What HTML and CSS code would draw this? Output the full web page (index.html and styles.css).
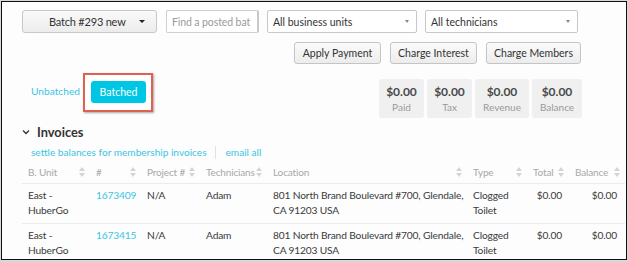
FILE: index.html
```html
<!DOCTYPE html>
<html>
<head>
<meta charset="utf-8">
<link rel="stylesheet" href="styles.css">
</head>
<body>
<div class="frame">
  <div class="toolbar">
    <button class="batch-btn"><span>Batch #293 new</span><span class="caret"></span></button>
    <input class="search" type="text" placeholder="Find a posted bat">
    <div class="select sel-bu"><span>All business units</span><span class="arrow"></span></div>
    <div class="select sel-tech"><span>All technicians</span><span class="arrow"></span></div>
  </div>
  <div class="actions">
    <button class="btn w-apply">Apply Payment</button>
    <button class="btn w-interest">Charge Interest</button>
    <button class="btn w-members">Charge Members</button>
  </div>
  <div class="summary">
    <div class="tabs">
      <span class="tab-link">Unbatched</span>
      <div class="highlight"><span class="tab-active">Batched</span></div>
    </div>
    <div class="stats">
      <div class="stat w-paid"><b>$0.00</b><span>Paid</span></div>
      <div class="stat w-tax"><b>$0.00</b><span>Tax</span></div>
      <div class="stat w-rev"><b>$0.00</b><span>Revenue</span></div>
      <div class="stat w-bal"><b>$0.00</b><span>Balance</span></div>
    </div>
  </div>
  <div class="section-title">
    <svg class="chev" width="8" height="6" viewBox="0 0 8 6"><path d="M1 1.5 L4 4.5 L7 1.5" fill="none" stroke="#333" stroke-width="1.3"/></svg>
    <span>Invoices</span>
  </div>
  <div class="links">
    <span class="link">settle balances for membership invoices</span>
    <span class="sep"></span>
    <span class="link">email all</span>
  </div>
  <table class="grid">
    <colgroup>
      <col class="c1"><col class="c2"><col class="c3"><col class="c4"><col class="c5"><col class="c6"><col class="c7"><col class="c8">
    </colgroup>
    <thead>
      <tr>
        <th><div class="th"><span>B. Unit</span><i class="sort"></i></div></th>
        <th><div class="th"><span>#</span><i class="sort"></i></div></th>
        <th><div class="th"><span>Project #</span><i class="sort"></i></div></th>
        <th><div class="th"><span>Technicians</span><i class="sort"></i></div></th>
        <th><div class="th"><span>Location</span><i class="sort"></i></div></th>
        <th><div class="th"><span>Type</span><i class="sort"></i></div></th>
        <th><div class="th"><span>Total</span><i class="sort"></i></div></th>
        <th><div class="th"><span>Balance</span><i class="sort"></i></div></th>
      </tr>
    </thead>
    <tbody>
      <tr>
        <td>East -<br>HuberGo</td>
        <td class="num">1673409</td>
        <td>N/A</td>
        <td>Adam</td>
        <td>801 North Brand Boulevard #700, Glendale,<br>CA 91203 USA</td>
        <td>Clogged<br>Toilet</td>
        <td class="money">$0.00</td>
        <td class="money">$0.00</td>
      </tr>
      <tr>
        <td>East -<br>HuberGo</td>
        <td class="num">1673415</td>
        <td>N/A</td>
        <td>Adam</td>
        <td>801 North Brand Boulevard #700, Glendale,<br>CA 91203 USA</td>
        <td>Clogged<br>Toilet</td>
        <td class="money">$0.00</td>
        <td class="money">$0.00</td>
      </tr>
    </tbody>
  </table>
</div>
</body>
</html>
```

FILE: styles.css
```css
* { box-sizing: border-box; }
html, body { margin: 0; padding: 0; background: #d8d8d8; }
body { font-family: Lato, "Open Sans", sans-serif; color: #3a3a3a; width: 628px; height: 262px; overflow: hidden; }

.frame {
  margin: 1px 0 0 1px;
  width: 626px;
  height: 259px;
  border: 1px solid #111;
  background: #fdfdfd;
  overflow: hidden;
  padding-left: 20px;
}

.toolbar { display: flex; margin-top: 8px; height: 23px; }
.batch-btn {
  width: 135px; height: 23px;
  border: 1px solid #c8c8c8; border-radius: 3px;
  background: linear-gradient(#fafafa, #ececec);
  font: 11px Lato, sans-serif; letter-spacing: -0.2px; color: #333; white-space: nowrap;
  display: flex; align-items: center; padding: 0 0 0 26px;
}
.batch-btn .caret {
  margin-left: auto; margin-right: 11px;
  width: 0; height: 0;
  border-left: 3px solid transparent; border-right: 3px solid transparent; border-top: 3px solid #222;
}
.search {
  margin-left: 9px; width: 93px; height: 23px;
  border: 1px solid #d0d0d0; border-right: 2px solid #c8c8c8; border-radius: 2px;
  font: 10.5px Lato, sans-serif; letter-spacing: -0.1px; padding: 0 5px; background: #fff;
}
.search::placeholder { color: #9a9a9a; }
.select {
  margin-left: 8px; height: 23px;
  border: 1px solid #c8c8c8; border-radius: 2px; background: #fff;
  display: flex; align-items: center; justify-content: space-between;
  padding: 0 7px 0 5px; font-size: 10.5px; color: #333;
}
.sel-bu { width: 150px; }
.sel-tech { width: 153px; }
.select .arrow {
  width: 0; height: 0;
  border-left: 2.5px solid transparent; border-right: 2.5px solid transparent; border-top: 3px solid #888;
}

.actions { display: flex; justify-content: flex-end; gap: 9px; margin-top: 9px; padding-right: 45px; }
.btn {
  height: 22px;
  border: 1px solid #c4c4c4; border-radius: 3px;
  background: linear-gradient(#fbfbfb, #ececec);
  font: 10.5px Lato, sans-serif; color: #333; padding: 0;
}
.w-apply { width: 87px; }
.w-interest { width: 87px; }
.w-members { width: 95px; }

.summary { display: flex; justify-content: space-between; margin-top: 9px; height: 45px; padding-right: 44px; }
.tabs { display: flex; align-items: flex-start; padding-left: 9px; }
.tab-link { color: #3cc4e4; font-size: 10.2px; margin-top: 12px; }
.highlight {
  margin-left: 3px; width: 70px; height: 39px;
  border: 2px solid #e0604f;
  box-shadow: 1px 1px 2px rgba(0,0,0,0.35);
  background: #fff;
  padding: 6px 0 0 6px;
}
.tab-active {
  display: flex; align-items: center; justify-content: center;
  width: 55px; height: 22px; border-radius: 3px;
  background: #00c6e6; color: #fff; font-size: 10.5px;
}
.stats { display: flex; gap: 3px; margin-top: 6px; }
.stat {
  height: 39px; background: #f0f0f0; border-radius: 3px;
  display: flex; flex-direction: column; align-items: center; padding-top: 5px;
}
.stat b { font-size: 12px; color: #4a4a4a; font-weight: 700; line-height: 15px; }
.stat span { font-size: 10px; color: #999; line-height: 14px; margin-top: 1px; }
.w-paid { width: 45px; }
.w-tax { width: 45px; }
.w-rev { width: 54px; }
.w-bal { width: 50px; }

.section-title { display: flex; align-items: center; margin-top: 5px; height: 18px; font-weight: 700; font-size: 12.8px; color: #333; padding-left: 0; }
.section-title .chev { margin-right: 7px; }

.links { display: flex; align-items: center; margin-top: 4px; padding-left: 9px; height: 14px; font-size: 10.1px; }
.link { color: #3cc4e4; }
.sep { width: 1px; height: 13px; background: #e2e2e2; margin: 0 10px 0 8px; }

.grid { border-collapse: collapse; table-layout: fixed; width: 603px; margin-top: 3px; font-size: 10.2px; letter-spacing: -0.15px; }
.c1 { width: 68px; } .c2 { width: 51px; } .c3 { width: 59px; } .c4 { width: 67px; }
.c5 { width: 200px; } .c6 { width: 60px; } .c7 { width: 42px; } .c8 { width: 56px; }
.grid th { font-weight: 400; color: #a8a8a8; text-align: left; padding: 0 5px 0 6px; height: 21px; border-bottom: 1px solid #ebebeb; overflow: hidden; font-size: 10px; }
.th { display: flex; justify-content: space-between; align-items: center; white-space: nowrap; }
.sort {
  position: relative; width: 6px; height: 10px; flex: none;
}
.sort::before, .sort::after {
  content: ""; position: absolute; left: 0; width: 0; height: 0;
  border-left: 3px solid transparent; border-right: 3px solid transparent;
}
.sort::before { top: 0; border-bottom: 4px solid #d4d4d4; }
.sort::after { bottom: 0; border-top: 4px solid #d4d4d4; }
.grid td { vertical-align: top; padding: 4px 6px 5px 6px; line-height: 15px; height: 38px; border-bottom: 1px solid #ececec; color: #3a3a3a; white-space: nowrap; overflow: hidden; }
.grid td.num { color: #3cc4e4; }
.grid td.money { text-align: right; padding-right: 7px; }
.grid td:last-child.money { padding-right: 8px; }
```
